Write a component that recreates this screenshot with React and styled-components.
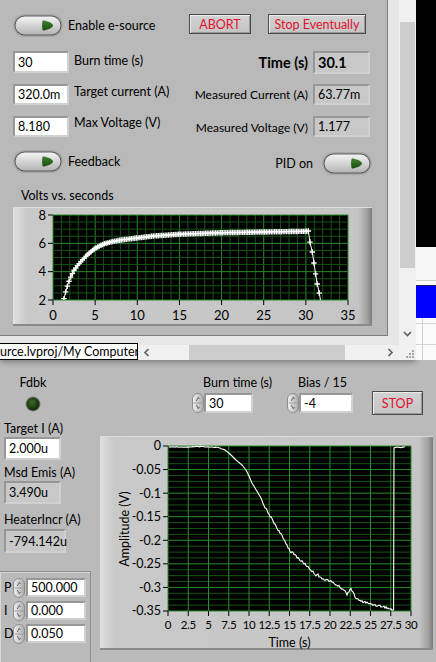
import React from "react";
import styled, { createGlobalStyle } from "styled-components";

const GlobalStyle = createGlobalStyle`
  html, body {
    margin: 0;
    padding: 0;
  }
  body {
    background: #bababa;
    font-family: Lato, "Noto Sans", sans-serif;
    font-size: 12px;
    color: #000;
  }
`;

const MINOR = "#165416";
const MAJOR = "#2b8d2b";
const FONT = "Lato, 'Noto Sans', sans-serif";

const Screen = styled.div`
  width: 436px;
  height: 662px;
  overflow: hidden;
  display: flex;
  flex-direction: column;
  background: #bababa;
`;

const TopRow = styled.div`
  display: flex;
  height: 360px;
  flex-shrink: 0;
  position: relative;
  z-index: 1;
`;

const Window = styled.div`
  width: 416px;
  display: flex;
  flex-direction: column;
  background: #f0f0f0;
  box-shadow: 0 2px 6px rgba(0, 0, 0, 0.35);
`;

const WindowBody = styled.div`
  display: flex;
  height: 345px;
`;

const PaneArea = styled.div`
  width: 399px;
  background: #e6e6e6;
`;

const Pane = styled.div`
  box-sizing: border-box;
  width: 388px;
  height: 336px;
  padding: 0 15px 0 13px;
  background: #b9b9b9;
  border-right: 1px solid #7c7c7c;
  border-bottom: 1px solid #7c7c7c;
  display: flex;
  flex-direction: column;
`;

const VScroll = styled.div`
  width: 17px;
  display: flex;
  flex-direction: column;
  background: #f0f0f0;
`;

const Track = styled.div`
  height: ${(p) => p.$h}px;
  flex: ${(p) => (p.$h ? "none" : 1)};
  background: ${(p) => (p.$thumb ? "#cdcdcd" : "transparent")};
  margin: ${(p) => (p.$thumb ? "0 1px 0 1px" : "0")};
  display: flex;
  align-items: flex-end;
  justify-content: center;
  padding-bottom: ${(p) => (p.$pb ? p.$pb : 0)}px;
`;

const HRow = styled.div`
  display: flex;
  height: 15px;
`;

const HScroll = styled.div`
  width: 399px;
  display: flex;
  align-items: center;
  background: #f0f0f0;
`;

const PathTag = styled.div`
  box-sizing: border-box;
  width: 138px;
  height: 17px;
  margin-top: -2px;
  align-self: flex-start;
  background: #fff;
  border: 1px solid #000;
  border-left: none;
  line-height: 15px;
  white-space: nowrap;
  overflow: hidden;
  font-size: 12.5px;
`;

const HThumb = styled.div`
  width: 156px;
  height: 15px;
  background: #cdcdcd;
  margin-left: ${(p) => p.$ml}px;
`;

const Chevron = styled.svg`
  margin-left: ${(p) => p.$ml || 0}px;
  flex-shrink: 0;
`;

const Grip = styled.div`
  width: 17px;
  display: flex;
  align-items: flex-end;
  justify-content: flex-end;
  background: #f0f0f0;
`;

const Desktop = styled.div`
  flex: 1;
  display: flex;
  flex-direction: column;
  background: #bababa;
`;

const DeskBlock = styled.div`
  height: ${(p) => p.$h}px;
  background: ${(p) => p.$bg};
  border-top: ${(p) => (p.$line ? `1px solid ${p.$line}` : "none")};
  flex-shrink: 0;
`;

const SheetBlock = styled.div`
  height: 43px;
  background-color: #fafafa;
  background-image: linear-gradient(#d2d2d2 1px, transparent 1px),
    linear-gradient(90deg, transparent 6px, #d2d2d2 6px, #d2d2d2 7px, transparent 7px);
  background-size: 100% 21px, 100% 100%;
  background-position: 0 5px, 0 0;
`;

const Row = styled.div`
  display: flex;
  justify-content: space-between;
  align-items: flex-start;
  margin-top: ${(p) => p.$mt}px;
  height: ${(p) => p.$h}px;
  flex-shrink: 0;
`;

const Group = styled.div`
  display: flex;
  align-items: ${(p) => p.$align || "center"};
  gap: ${(p) => p.$gap || 0}px;
  margin-right: ${(p) => p.$mr || 0}px;
  margin-top: ${(p) => p.$mt || 0}px;
`;

const Label = styled.span`
  display: block;
  white-space: nowrap;
  line-height: ${(p) => p.$lh || 16}px;
  margin-top: ${(p) => p.$mt || 0}px;
  margin-left: ${(p) => p.$ml || 0}px;
  font-weight: ${(p) => (p.$bold ? 700 : 400)};
  font-size: ${(p) => p.$size || 12}px;
`;

const PanelButton = styled.div`
  box-sizing: border-box;
  width: ${(p) => p.$w}px;
  height: ${(p) => p.$h || 20}px;
  margin-bottom: ${(p) => p.$mb || 0}px;
  border: 1px solid #4a4a4a;
  background: linear-gradient(#d2d2d2, #c4c4c4);
  box-shadow: inset 1px 1px 0 #ececec, inset -1px -1px 0 #979797;
  color: #e3112e;
  font-size: 12.5px;
  display: flex;
  align-items: center;
  justify-content: center;
  white-space: nowrap;
`;

const NumBox = styled.div`
  box-sizing: border-box;
  width: ${(p) => p.$w}px;
  height: ${(p) => p.$h}px;
  margin-left: ${(p) => p.$ml || 0}px;
  margin-top: ${(p) => p.$mt || 0}px;
  padding-left: 3px;
  background: ${(p) => (p.$ind ? "#c8c8c8" : "#ffffff")};
  border: 2px solid;
  border-color: #979797 #d0d0d0 #d0d0d0 #979797;
  display: flex;
  align-items: center;
  white-space: nowrap;
  font-weight: ${(p) => (p.$bold ? 700 : 400)};
  font-size: ${(p) => p.$size || 12.5}px;
  flex-shrink: 0;
`;

const GraphFrame = styled.div`
  width: ${(p) => p.$w}px;
  height: ${(p) => p.$h}px;
  margin-top: ${(p) => p.$mt}px;
  margin-left: ${(p) => p.$ml || 0}px;
  flex-shrink: 0;
  background: linear-gradient(
    to right,
    #e0e0e0 0px,
    #c9c9c9 14px,
    #c5c5c5 calc(100% - 14px),
    #a2a2a2 calc(100% - 5px),
    #7c7c7c 100%
  );
  box-shadow: inset 0 1px 0 #dadada, inset 0 -2px 0 #8a8a8a;
  & > svg {
    display: block;
  }
`;

const BottomPanel = styled.div`
  flex: 1;
  display: flex;
  background: #bababa;
`;

const LeftCol = styled.div`
  width: 92px;
  flex-shrink: 0;
  display: flex;
  flex-direction: column;
  align-items: flex-start;
  padding-top: 15px;
`;

const LedGroup = styled.div`
  width: 58px;
  margin-left: 4px;
  display: flex;
  flex-direction: column;
  align-items: center;
`;

const Cluster = styled.div`
  box-sizing: border-box;
  width: 91px;
  margin-top: 18px;
  padding: 6px 0 0 4px;
  border-top: 1px solid #8e8e8e;
  border-right: 1px solid #8e8e8e;
  box-shadow: inset 1px 1px 0 #d8d8d8;
  display: flex;
  flex-direction: column;
  gap: 4px;
  height: 100px;
`;

const PidRow = styled.div`
  display: flex;
  align-items: center;
  height: 19px;
`;

const PidLetter = styled.span`
  width: 9px;
  line-height: 19px;
  font-size: 12.5px;
`;

const RightCol = styled.div`
  flex: 1;
  display: flex;
  flex-direction: column;
  padding-top: 15px;
`;

const ControlsRow = styled.div`
  display: flex;
  align-items: flex-end;
  margin-left: 100px;
`;

const CtlGroup = styled.div`
  width: ${(p) => p.$w}px;
  display: flex;
  flex-direction: column;
`;

const SpinRow = styled.div`
  display: flex;
  align-items: center;
  margin-top: 2px;
`;

function Toggle() {
  return (
    <svg width="50" height="23" viewBox="0 0 50 23">
      <defs>
        <linearGradient id="tgFill" x1="0" y1="0" x2="0" y2="1">
          <stop offset="0" stopColor="#f4f4f4" />
          <stop offset="1" stopColor="#b4b4b4" />
        </linearGradient>
        <linearGradient id="tgLed" x1="0" y1="0" x2="0" y2="1">
          <stop offset="0" stopColor="#3f8030" />
          <stop offset="1" stopColor="#1c4d12" />
        </linearGradient>
      </defs>
      <rect x="0" y="0" width="50" height="23" rx="11.5" fill="#9a9a9a" opacity="0.55" />
      <rect x="1.5" y="1.5" width="47" height="20" rx="10" fill="#5a5a5a" />
      <rect x="2.5" y="2.5" width="45" height="18" rx="9" fill="url(#tgFill)" />
      <path
        d="M30 6.5 C33 6.5 40 9 40 11.5 C40 14 33 16.5 30 16.5 C28.8 16.5 28.8 6.5 30 6.5 Z"
        fill="url(#tgLed)"
      />
    </svg>
  );
}

function Spinner() {
  return (
    <svg width="12" height="20" viewBox="0 0 12 20">
      <defs>
        <linearGradient id="spFill" x1="0" y1="0" x2="1" y2="0">
          <stop offset="0" stopColor="#f2f2f2" />
          <stop offset="1" stopColor="#a9a9a9" />
        </linearGradient>
      </defs>
      <rect x="0.5" y="0.5" width="11" height="19" rx="5.5" fill="url(#spFill)" stroke="#8c8c8c" />
      <line x1="1.5" y1="10" x2="10.5" y2="10" stroke="#9c9c9c" />
      <path d="M4.3 8 L6.3 4.3 L7.4 6" fill="none" stroke="#5a5a5a" strokeWidth="0.9" />
      <path d="M4.3 12 L6.3 15.7 L7.4 14" fill="none" stroke="#5a5a5a" strokeWidth="0.9" />
    </svg>
  );
}

function Led() {
  return (
    <svg width="16" height="16" viewBox="0 0 16 16" style={{ marginTop: 5 }}>
      <defs>
        <radialGradient id="ledFill" cx="0.42" cy="0.38" r="0.6">
          <stop offset="0" stopColor="#3d6a28" />
          <stop offset="1" stopColor="#10290a" />
        </radialGradient>
      </defs>
      <circle cx="8" cy="8" r="7.5" fill="#7a7a7a" />
      <circle cx="8" cy="8" r="6.5" fill="url(#ledFill)" />
    </svg>
  );
}

const interp = (knots, t) => {
  for (let i = 0; i < knots.length - 1; i++) {
    const [t0, v0] = knots[i];
    const [t1, v1] = knots[i + 1];
    if (t >= t0 && t <= t1) return v0 + ((t - t0) / (t1 - t0)) * (v1 - v0);
  }
  return knots[knots.length - 1][1];
};

const jitter = (i) => {
  const s = Math.sin(i * 12.9898) * 43758.5453;
  return s - Math.floor(s) - 0.5;
};

const riseKnots = [
  [1.3, 2.1], [1.6, 2.8], [2, 3.5], [2.5, 4.1], [3, 4.5], [4, 5.15], [5, 5.65],
  [6, 5.95], [7, 6.12], [8, 6.23], [10, 6.38], [12, 6.52], [15, 6.64],
  [20, 6.75], [25, 6.8], [30, 6.85], [30.3, 6.87],
];

function TopChart() {
  const W = 359, H = 119;
  const X0 = 40, X1 = 335, Y0 = 8, Y1 = 93;
  const sx = (t) => X0 + (t / 35) * (X1 - X0);
  const sy = (v) => Y1 - ((v - 2) / 6) * (Y1 - Y0);

  const grid = [];
  for (let t = 0; t <= 35; t++) {
    grid.push(
      <line key={"v" + t} x1={sx(t)} x2={sx(t)} y1={Y0} y2={Y1} stroke={t % 5 === 0 ? MAJOR : MINOR} />
    );
  }
  for (let k = 0; k <= 12; k++) {
    const y = sy(2 + k * 0.5);
    grid.push(<line key={"h" + k} x1={X0} x2={X1} y1={y} y2={y} stroke={k % 4 === 0 ? MAJOR : MINOR} />);
  }

  const pts = [];
  for (let t = 1.3; t <= 30.3; t += 0.2) pts.push([t, interp(riseKnots, t)]);
  const drop = [[30.49, 6.09], [30.76, 5.39], [30.96, 4.61], [31.16, 3.84], [31.35, 3.13], [31.59, 2.49]];
  const all = pts.concat(drop);
  const line = all.map(([t, v], i) => `${i ? "L" : "M"}${sx(t).toFixed(2)} ${sy(v).toFixed(2)}`).join(" ") +
    ` L${sx(31.85).toFixed(2)} ${sy(1.6).toFixed(2)}`;
  const crosses = all
    .map(([t, v]) => {
      const x = sx(t), y = sy(v);
      return `M${(x - 2.7).toFixed(2)} ${y.toFixed(2)}H${(x + 2.7).toFixed(2)}M${x.toFixed(2)} ${(y - 2.7).toFixed(2)}V${(y + 2.7).toFixed(2)}`;
    })
    .join("");

  return (
    <svg width={W} height={H} viewBox={`0 0 ${W} ${H}`} fontFamily={FONT} fontSize="13">
      <defs>
        <clipPath id="topClip">
          <rect x={X0} y={Y0 - 3} width={X1 - X0} height={Y1 - Y0 + 3} />
        </clipPath>
      </defs>
      <rect x={X0} y={Y0} width={X1 - X0} height={Y1 - Y0} fill="#000" />
      {grid}
      <g clipPath="url(#topClip)">
        <path d={line} fill="none" stroke="#fff" strokeWidth="1" />
        <path d={crosses} fill="none" stroke="#fff" strokeWidth="1.3" />
      </g>
      {[8, 6, 4, 2].map((v) => (
        <g key={v}>
          <line x1={X0 - 5} x2={X0} y1={sy(v)} y2={sy(v)} stroke="#000" />
          <text x={X0 - 7} y={sy(v)} dy="0.35em" textAnchor="end">{v}</text>
        </g>
      ))}
      {[0, 5, 10, 15, 20, 25, 30, 35].map((t) => (
        <g key={t}>
          <line x1={sx(t)} x2={sx(t)} y1={Y1} y2={Y1 + 5} stroke="#000" />
          <text x={sx(t)} y={Y1 + 15} dy="0.35em" textAnchor="middle">{t}</text>
        </g>
      ))}
    </svg>
  );
}

const ampKnots = [
  [169, 449], [190, 449], [200, 448.5], [210, 449], [218, 449.5], [225, 452], [230, 456],
  [236, 462], [242, 467], [246, 472], [249, 478], [252, 485], [255, 490], [258, 495],
  [261, 500], [263, 505], [266, 511], [268, 515], [270, 518], [273, 523], [276, 528],
  [280, 535], [283, 540], [286, 545], [290, 553], [295, 557], [300, 562], [305, 566],
  [310, 571], [313, 574], [316, 577], [318, 576], [320, 580], [324, 581], [330, 583],
  [335, 586], [340, 589], [344, 592], [347, 596], [349, 593], [351, 590], [353, 595],
  [356, 600], [360, 603], [365, 604], [370, 606], [375, 607], [380, 608], [385, 609],
  [390, 611], [393, 612],
];

function AmplitudeGraph() {
  const W = 333, H = 214;
  const OX = 100, OY = 438;
  const X0 = 68, X1 = 311, Y0 = 10, Y1 = 175;
  const sx = (t) => X0 + (t / 30) * (X1 - X0);
  const sy = (v) => Y0 + (-v / 0.35) * (Y1 - Y0);

  const grid = [];
  for (let k = 0; k <= 28; k++) {
    const y = sy(-k * 0.0125);
    grid.push(<line key={"h" + k} x1={X0} x2={X1} y1={y} y2={y} stroke={k % 4 === 0 ? MAJOR : MINOR} />);
  }
  for (let k = 0; k <= 12; k++) {
    const x = sx(k * 2.5);
    grid.push(<line key={"v" + k} x1={x} x2={x} y1={Y0} y2={Y1} stroke={MAJOR} />);
  }

  const seg = [];
  let i = 0;
  for (let x = 169; x <= 393; x += 1) {
    let y = interp(ampKnots, x);
    if (x > 262) y += jitter(i) * 2.2;
    else if (x < 222) y += jitter(i) * 0.6;
    seg.push([x - OX, y - OY]);
    i++;
  }
  seg.push([393.6 - OX, 612 - OY], [394 - OX, 450 - OY], [397 - OX, 449 - OY], [401 - OX, 449.6 - OY], [405 - OX, 448.8 - OY]);
  const d = seg.map(([x, y], k) => `${k ? "L" : "M"}${x.toFixed(2)} ${y.toFixed(2)}`).join(" ");

  const yLabels = ["0", "-0.05", "-0.1", "-0.15", "-0.2", "-0.25", "-0.3", "-0.35"];
  const xLabels = ["0", "2.5", "5", "7.5", "10", "12.5", "15", "17.5", "20", "22.5", "25", "27.5", "30"];

  return (
    <svg width={W} height={H} viewBox={`0 0 ${W} ${H}`} fontFamily={FONT} fontSize="12.5">
      <rect x={X0} y={Y0} width={X1 - X0} height={Y1 - Y0} fill="#000" />
      {grid}
      <path d={d} fill="none" stroke="#fff" strokeWidth="1.1" />
      {yLabels.map((lab, k) => (
        <g key={lab}>
          <line x1={X0 - 5} x2={X0} y1={sy(-k * 0.05)} y2={sy(-k * 0.05)} stroke="#000" />
          <text x={X0 - 7} y={sy(-k * 0.05)} dy="0.35em" textAnchor="end">{lab}</text>
        </g>
      ))}
      <g fontSize="11.5" letterSpacing="-0.3">
        {xLabels.map((lab, k) => (
          <g key={lab}>
            <line x1={sx(k * 2.5)} x2={sx(k * 2.5)} y1={Y1} y2={Y1 + 5} stroke="#000" />
            <text x={sx(k * 2.5)} y={Y1 + 14} dy="0.35em" textAnchor="middle">{lab}</text>
          </g>
        ))}
      </g>
      <text x={(X0 + X1) / 2} y={207} dy="0.35em" textAnchor="middle">Time (s)</text>
      <text x={24.5} y={93} dy="0.35em" textAnchor="middle" transform="rotate(-90 24.5 93)">
        Amplitude (V)
      </text>
    </svg>
  );
}

function ChevronIcon({ dir, ml }) {
  const paths = {
    down: "M1 2 L4.5 5.5 L8 2",
    left: "M5.5 1 L2 4.5 L5.5 8",
    right: "M2.5 1 L6 4.5 L2.5 8",
  };
  return (
    <Chevron $ml={ml} width="9" height="9" viewBox="0 0 9 9">
      <path d={paths[dir]} fill="none" stroke="#5f5f5f" strokeWidth="1.6" />
    </Chevron>
  );
}

function GripIcon() {
  const dots = [[9, 1], [6, 4], [9, 4], [3, 7], [6, 7], [9, 7]];
  return (
    <svg width="13" height="11" viewBox="0 0 13 11">
      {dots.map(([x, y]) => (
        <rect key={x + "-" + y} x={x} y={y} width="2" height="2" fill="#a8a8a8" />
      ))}
    </svg>
  );
}

export default function App() {
  return (
    <>
      <GlobalStyle />
      <Screen>
        <TopRow>
          <Window>
            <WindowBody>
              <PaneArea>
                <Pane>
                  <Row $mt={14} $h={23}>
                    <Group $gap={5}>
                      <Toggle />
                      <Label $size={12.5}>Enable e-source</Label>
                    </Group>
                    <Group $gap={17} $mr={6}>
                      <PanelButton $w={62}>ABORT</PanelButton>
                      <PanelButton $w={98}>Stop Eventually</PanelButton>
                    </Group>
                  </Row>
                  <Row $mt={14} $h={23}>
                    <Group $gap={5} $align="flex-start">
                      <NumBox $w={56} $h={22}>30</NumBox>
                      <Label $lh={20} $size={12.5}>Burn time (s)</Label>
                    </Group>
                    <Group $gap={5} $mr={2}>
                      <Label $bold $size={14.5}>Time (s)</Label>
                      <NumBox $ind $bold $size={14.5} $w={57} $h={23}>30.1</NumBox>
                    </Group>
                  </Row>
                  <Row $mt={10} $h={21}>
                    <Group $gap={5} $align="flex-start">
                      <NumBox $w={56} $h={21}>320.0m</NumBox>
                      <Label $lh={16} $size={12.5}>Target current (A)</Label>
                    </Group>
                    <Group $gap={5} $mr={2}>
                      <Label>Measured Current (A)</Label>
                      <NumBox $ind $w={57} $h={21}>63.77m</NumBox>
                    </Group>
                  </Row>
                  <Row $mt={11} $h={21}>
                    <Group $gap={5} $align="flex-start">
                      <NumBox $w={56} $h={21}>8.180</NumBox>
                      <Label $lh={14} $size={12.5}>Max Voltage (V)</Label>
                    </Group>
                    <Group $gap={5} $mr={2}>
                      <Label $mt={2}>Measured Voltage (V)</Label>
                      <NumBox $ind $w={57} $h={21}>1.177</NumBox>
                    </Group>
                  </Row>
                  <Row $mt={13} $h={25}>
                    <Group $gap={5}>
                      <Toggle />
                      <Label $size={12.5}>Feedback</Label>
                    </Group>
                    <Group $gap={9} $mt={2}>
                      <Label $size={12.5}>PID on</Label>
                      <Toggle />
                    </Group>
                  </Row>
                  <Label $mt={14} $ml={8} $lh={14} $size={12.5}>Volts vs. seconds</Label>
                  <GraphFrame $w={359} $h={119} $mt={4}>
                    <TopChart />
                  </GraphFrame>
                </Pane>
              </PaneArea>
              <VScroll>
                <Track $h={22} />
                <Track $h={246} $thumb />
                <Track $pb={6}>
                  <ChevronIcon dir="down" />
                </Track>
              </VScroll>
            </WindowBody>
            <HRow>
              <HScroll>
                <PathTag>urce.lvproj/My Computer</PathTag>
                <ChevronIcon dir="left" ml={5} />
                <HThumb $ml={37} />
                <ChevronIcon dir="right" ml={41} />
              </HScroll>
              <Grip>
                <GripIcon />
              </Grip>
            </HRow>
          </Window>
          <Desktop>
            <DeskBlock $h={247} $bg="#000" />
            <DeskBlock $h={33} $bg="#f6f6f6" />
            <DeskBlock $h={4} $bg="#fbfbfb" $line="#cfcfcf" />
            <DeskBlock $h={32} $bg="#0000fe" $line="#1a1a5a" />
            <SheetBlock />
          </Desktop>
        </TopRow>
        <BottomPanel>
          <LeftCol>
            <LedGroup>
              <Label $size={12.5}>Fdbk</Label>
              <Led />
            </LedGroup>
            <Label $mt={9} $ml={4} $size={12.5}>Target I (A)</Label>
            <NumBox $w={57} $h={23} $ml={4}>2.000u</NumBox>
            <Label $mt={5} $ml={4} $size={12.5}>Msd Emis (A)</Label>
            <NumBox $ind $w={57} $h={23} $ml={4}>3.490u</NumBox>
            <Label $mt={8} $ml={4} $size={12.5}>HeaterIncr (A)</Label>
            <NumBox $ind $w={62} $h={24} $ml={4} $mt={1}>-794.142u</NumBox>
            <Cluster>
              <PidRow>
                <PidLetter>P</PidLetter>
                <Spinner />
                <NumBox $w={60} $h={19} $ml={1}>500.000</NumBox>
              </PidRow>
              <PidRow>
                <PidLetter>I</PidLetter>
                <Spinner />
                <NumBox $w={60} $h={19} $ml={1}>0.000</NumBox>
              </PidRow>
              <PidRow>
                <PidLetter>D</PidLetter>
                <Spinner />
                <NumBox $w={60} $h={19} $ml={1}>0.050</NumBox>
              </PidRow>
            </Cluster>
          </LeftCol>
          <RightCol>
            <ControlsRow>
              <CtlGroup $w={95}>
                <Label $ml={11} $size={12.5}>Burn time (s)</Label>
                <SpinRow>
                  <Spinner />
                  <NumBox $w={49} $h={20}>30</NumBox>
                </SpinRow>
              </CtlGroup>
              <CtlGroup $w={85}>
                <Label $ml={11} $size={12.5}>Bias / 15</Label>
                <SpinRow>
                  <Spinner />
                  <NumBox $w={54} $h={20}>-4</NumBox>
                </SpinRow>
              </CtlGroup>
              <PanelButton $w={51} $h={24} $mb={-2}>STOP</PanelButton>
            </ControlsRow>
            <GraphFrame $w={333} $h={214} $mt={23} $ml={8}>
              <AmplitudeGraph />
            </GraphFrame>
          </RightCol>
        </BottomPanel>
      </Screen>
    </>
  );
}
